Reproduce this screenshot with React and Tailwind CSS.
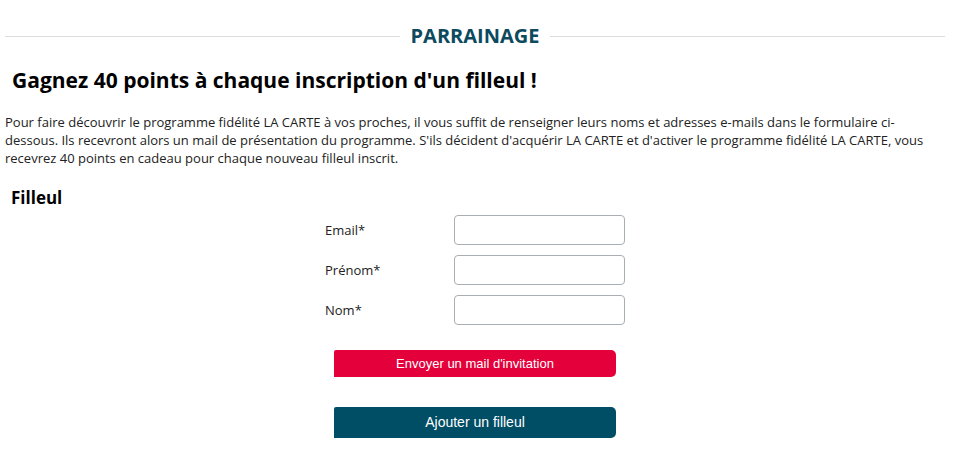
import React from 'react';

const fields = [
  { label: 'Email*', type: 'email' },
  { label: 'Prénom*', type: 'text' },
  { label: 'Nom*', type: 'text' },
];

export default function App() {
  return (
    <div className="w-[959px] h-[465px] bg-white font-['Open_Sans',sans-serif] text-[#222]">
      <div className="ml-[5px] w-[940px]">
        {/* Section title */}
        <div className="mt-[22px] h-[28px] flex items-center gap-[11px]">
          <div className="flex-1 h-px bg-[#dcdcdc]" />
          <h1 className="text-[20px] font-bold text-[#0d4a60] leading-[28px]">PARRAINAGE</h1>
          <div className="flex-1 h-px bg-[#dcdcdc]" />
        </div>

        <h2 className="mt-[16px] ml-[7px] text-[21px] leading-[28px] font-bold text-black">
          Gagnez 40 points à chaque inscription d'un filleul !
        </h2>

        <p className="mt-[19px] text-[13px] leading-[18px] text-[#222]">
          Pour faire découvrir le programme fidélité LA CARTE à vos proches, il vous suffit de renseigner leurs noms et adresses e-mails dans le formulaire ci-dessous. Ils recevront alors un mail de présentation du programme. S'ils décident d'acquérir LA CARTE et d'activer le programme fidélité LA CARTE, vous recevrez 40 points en cadeau pour chaque nouveau filleul inscrit.
        </p>

        <h3 className="mt-[19px] ml-[6px] text-[17px] leading-[24px] font-bold text-black">Filleul</h3>

        <div className="mt-[5px] ml-[320px] flex flex-col gap-[10px]">
          {fields.map((f) => (
            <div key={f.label} className="flex items-center h-[30px]">
              <label className="w-[129px] pt-[2px] text-[13px] text-[#222]">{f.label}</label>
              <input
                type={f.type}
                className="w-[171px] h-[30px] border border-[#a9aeb2] rounded-[4px] bg-white outline-none"
              />
            </div>
          ))}
        </div>

        <div className="ml-[329px] flex flex-col font-['Liberation_Sans',Arial,sans-serif]">
          <button className="mt-[25px] w-[282px] h-[27px] bg-[#e4003b] text-white text-[13px] rounded-tl-[2px] rounded-r-[5px]">
            Envoyer un mail d'invitation
          </button>
          <button className="mt-[30px] w-[282px] h-[31px] bg-[#004d66] text-white text-[14px] rounded-tl-[2px] rounded-r-[5px]">
            Ajouter un filleul
          </button>
        </div>
      </div>
    </div>
  );
}
